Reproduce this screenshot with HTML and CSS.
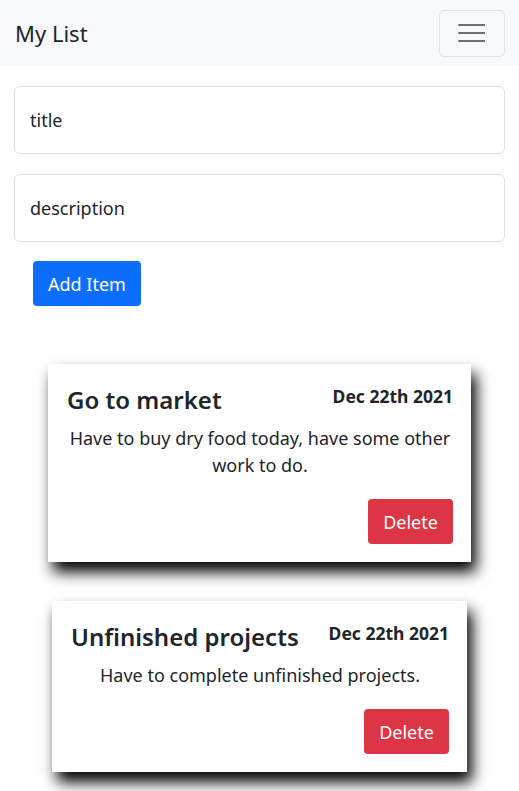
FILE: index.html
```html
<!DOCTYPE html>
<html lang="en">
<head>
<meta charset="utf-8">
<title>My List</title>
<link rel="stylesheet" href="styles.css">
</head>
<body>
<nav class="navbar">
  <span class="brand">My List</span>
  <button class="toggler" aria-label="Toggle navigation">
    <svg width="30" height="30" viewBox="0 0 30 30"><path d="M4 7h26M4 15h26M4 23h26" stroke="rgba(0,0,0,0.55)" stroke-width="2" stroke-linecap="round"/></svg>
  </button>
</nav>
<main class="container">
  <form class="add-form">
    <input class="field" type="text" placeholder="title">
    <input class="field" type="text" placeholder="description">
    <button class="btn btn-primary" type="button">Add Item</button>
  </form>
  <div class="list">
    <div class="card card-wide">
      <div class="card-head">
        <h3 class="card-title">Go to market</h3>
        <span class="card-date">Dec 22th 2021</span>
      </div>
      <p class="card-text">Have to buy dry food today, have some other work to do.</p>
      <div class="card-actions"><button class="btn btn-danger" type="button">Delete</button></div>
    </div>
    <div class="card card-narrow">
      <div class="card-head">
        <h3 class="card-title">Unfinished projects</h3>
        <span class="card-date">Dec 22th 2021</span>
      </div>
      <p class="card-text">Have to complete unfinished projects.</p>
      <div class="card-actions"><button class="btn btn-danger" type="button">Delete</button></div>
    </div>
  </div>
</main>
</body>
</html>
```
FILE: styles.css
```css
* { box-sizing: border-box; }
html, body { margin: 0; padding: 0; }
body {
  font-family: "Noto Sans", "Open Sans", sans-serif;
  color: #212529;
  background: #fff;
}
.navbar {
  height: 66px;
  background: #f8f9fa;
  display: flex;
  align-items: center;
  justify-content: space-between;
  padding: 0 14px 0 15px;
}
.brand { font-size: 22px; color: #212529; }
.toggler {
  width: 66px;
  height: 47px;
  border: 1px solid #e2e3e5;
  border-radius: 5px;
  background: transparent;
  display: flex;
  align-items: center;
  justify-content: center;
  padding: 0;
}
.toggler svg { display: block; margin-left: -4px; }
.container { padding: 20px 14px 20px 14px; }
.add-form { display: flex; flex-direction: column; gap: 20px; align-items: flex-start; }
.field {
  width: 100%;
  height: 68px;
  border: 1px solid #dee2e6;
  border-radius: 6px;
  padding: 0 15px;
  font: inherit;
  font-size: 18px;
  color: #212529;
}
.field::placeholder { color: #212529; }
.btn {
  font: inherit;
  font-size: 18px;
  border: none;
  border-radius: 4px;
  color: #fff;
  height: 45px;
  padding: 0;
  white-space: nowrap;
}
.btn-primary { background: #0d6efd; margin-left: 19px; margin-top: -1px; width: 108px; }
.btn-danger { background: #dc3545; width: 85px; }
.list { display: flex; flex-direction: column; align-items: center; gap: 39px; margin-top: 58px; }
.card {
  background: #fff;
  padding: 20px 18px 18px 19px;
  box-shadow: 5px 10px 14px #000;
}
.card-wide { width: 423px; }
.card-narrow { width: 415px; }
.card-head { display: flex; justify-content: space-between; align-items: flex-start; }
.card-title { margin: 0; font-size: 24px; font-weight: 600; line-height: 32px; }
.card-date { font-size: 17.5px; font-weight: 700; line-height: 24px; }
.card-text { margin: 9px 0 20px; text-align: center; font-size: 18px; line-height: 27px; }
.card-actions { display: flex; justify-content: flex-end; }
```
